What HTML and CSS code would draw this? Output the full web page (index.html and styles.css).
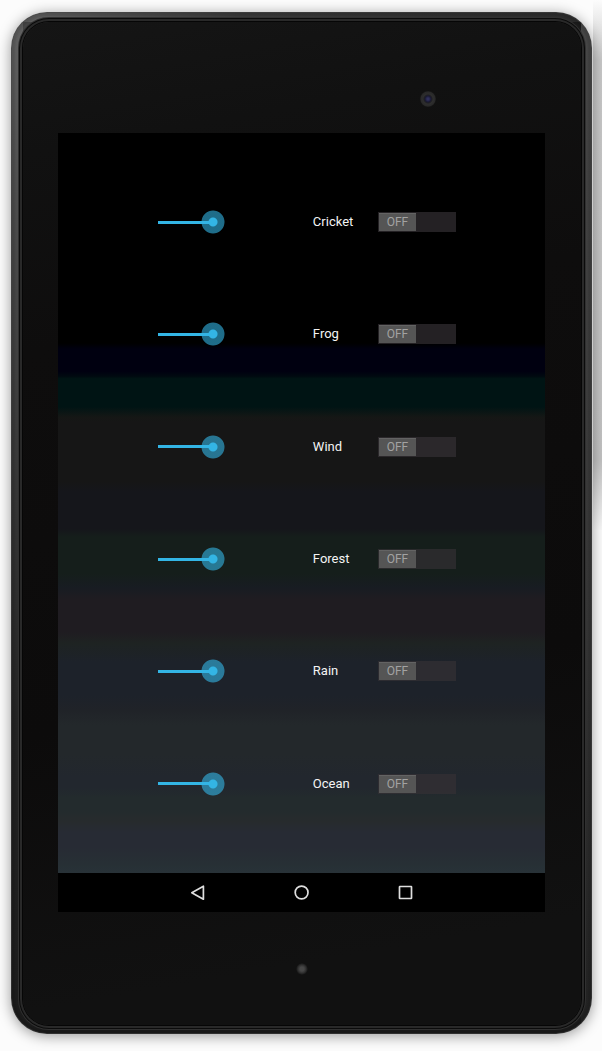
FILE: index.html
```html
<!DOCTYPE html>
<html lang="en">
<head>
<meta charset="utf-8">
<meta name="viewport" content="width=device-width, initial-scale=1">
<title>Nature sounds</title>
<link rel="stylesheet" href="styles.css">
</head>
<body>
<div class="device">
  <div class="face">
    <div class="top-bezel"><span class="camera"></span></div>
    <div class="screen">
      <main class="sounds">
        <div class="sound">
          <input class="volume" type="range" value="100" aria-label="Cricket volume">
          <label class="name" for="cricket">Cricket</label>
          <button class="switch" id="cricket" type="button" role="switch" aria-checked="false"><span class="knob">OFF</span></button>
        </div>
        <div class="sound">
          <input class="volume" type="range" value="100" aria-label="Frog volume">
          <label class="name" for="frog">Frog</label>
          <button class="switch" id="frog" type="button" role="switch" aria-checked="false"><span class="knob">OFF</span></button>
        </div>
        <div class="sound">
          <input class="volume" type="range" value="100" aria-label="Wind volume">
          <label class="name" for="wind">Wind</label>
          <button class="switch" id="wind" type="button" role="switch" aria-checked="false"><span class="knob">OFF</span></button>
        </div>
        <div class="sound">
          <input class="volume" type="range" value="100" aria-label="Forest volume">
          <label class="name" for="forest">Forest</label>
          <button class="switch" id="forest" type="button" role="switch" aria-checked="false"><span class="knob">OFF</span></button>
        </div>
        <div class="sound">
          <input class="volume" type="range" value="100" aria-label="Rain volume">
          <label class="name" for="rain">Rain</label>
          <button class="switch" id="rain" type="button" role="switch" aria-checked="false"><span class="knob">OFF</span></button>
        </div>
        <div class="sound">
          <input class="volume" type="range" value="100" aria-label="Ocean volume">
          <label class="name" for="ocean">Ocean</label>
          <button class="switch" id="ocean" type="button" role="switch" aria-checked="false"><span class="knob">OFF</span></button>
        </div>
      </main>
      <nav class="navbar">
        <button class="nav-button" type="button" aria-label="Back"><svg width="16" height="16" viewBox="0 0 16 16"><path d="M13.4 1.2v13L1.8 7.7z"/></svg></button>
        <button class="nav-button" type="button" aria-label="Home"><svg width="16" height="16" viewBox="0 0 16 16"><circle cx="7.6" cy="7.5" r="6.4"/></svg></button>
        <button class="nav-button" type="button" aria-label="Recent apps"><svg width="16" height="16" viewBox="0 0 16 16"><rect x="1.5" y="1.5" width="12" height="12" rx=".4"/></svg></button>
      </nav>
    </div>
    <div class="bottom-bezel"><span class="led"></span></div>
  </div>
</div>
</body>
</html>
```
FILE: styles.css
```css
* { box-sizing: border-box; }

body {
  margin: 0;
  min-height: 100vh;
  padding: 12px 10px 17px 11px;
  display: flex;
  background:
    linear-gradient(#fcfcfc, #c8c8c8 60px, #c2c2c2 460px, #fafafa 530px) right top / 9px 530px no-repeat,
    #fcfcfc;
  font-family: Roboto, "Liberation Sans", sans-serif;
}

.device {
  flex: 1;
  display: flex;
  padding: 10px 11px 9px 12px;
  border-radius: 36px;
  background:
    linear-gradient(#626262, #4c4c4c 20%, #242424 70%, #1c1c1c) left / 12px 100% no-repeat,
    linear-gradient(#484848, #363636 60%, #222) right / 11px 100% no-repeat,
    linear-gradient(90deg, #626262, #3a3a3a 40%, #2c2c2c) top / 100% 10px no-repeat,
    linear-gradient(135deg, #5a5a5a, #1c1c1c 60px);
  box-shadow: 0 2px 14px rgba(0, 0, 0, .4), inset 0 0 0 1px rgba(70, 70, 70, .5), inset 0 0 2px 4px rgba(0, 0, 0, .12);
}

.face {
  flex: 1;
  display: flex;
  flex-direction: column;
  border-radius: 26px;
  padding: 0 36px 0 35px;
  background: linear-gradient(170deg, #151515, #111 12%, #0e0d0d 30%, #0c0b0b 65%, #111 90%);
  box-shadow: 0 0 0 1px #060606, 0 0 0 3px #292929, 0 0 0 4px #0b0b0b, 0 0 0 5px #303030;
}

.top-bezel {
  height: 111px;
  display: flex;
  align-items: flex-end;
  padding: 0 109px 26px 0;
  justify-content: flex-end;
}

.camera {
  width: 16px;
  height: 16px;
  border-radius: 50%;
  background: radial-gradient(circle, #30305c 0 1px, #191932 3px, #202023 4px, #2e2e2e 5px, #292929 7px, #191919 8px);
}

.screen {
  flex: 1;
  display: flex;
  flex-direction: column;
  background: #000;
}

.sounds {
  flex: 1;
  display: grid;
  grid-template-rows: repeat(6, 1fr);
  padding: 33px 0;
  background: linear-gradient(
    #000 0 28.4%,
    #000010 29.2% 32.2%,
    #000a10 32.9%,
    #001414 33.2% 37%,
    #151715 38.4%,
    #161616 39% 47%,
    #15161b 48.5% 53.5%,
    #151e1b 54.6% 59.5%,
    #181c22 61.5%,
    #1f1c21 63% 67.4%,
    #1e2322 69%,
    #1d222a 71.5% 76%,
    #202328 78%,
    #23282b 80% 84%,
    #22272e 87% 88.5%,
    #232b2d 89.8% 91.5%,
    #272b2d 93%,
    #272b34 94.5% 96.5%,
    #273035 99%,
    #283238);
}

.sound {
  display: grid;
  grid-template-columns: 155fr 65fr 78px;
  align-items: center;
  margin: 0 18.3% 0 20.5%;
}

.volume {
  appearance: none;
  width: 67px;
  height: 24px;
  margin: 0;
  background: linear-gradient(#33b5e5, #33b5e5) left center / 55px 3px no-repeat;
}

.volume::-webkit-slider-thumb {
  appearance: none;
  width: 24px;
  height: 24px;
  border-radius: 50%;
  background: radial-gradient(circle, #33b5e5 0 4px, rgba(51, 181, 229, .6) 5px 11px, transparent 12px);
}

.name {
  color: #f4f4f4;
  font-size: 13px;
  line-height: 16px;
}

.switch {
  height: 20px;
  padding: 1px;
  border: 0;
  background: rgba(53, 49, 53, .68);
  font: 12px/18px Roboto, "Liberation Sans", sans-serif;
}

.knob {
  display: block;
  width: 37px;
  color: #a2a2a2;
  background: #555;
  box-shadow: inset 0 1px #636363;
  text-align: center;
}

.navbar {
  height: 39px;
  display: flex;
  justify-content: center;
  gap: 88px;
}

.nav-button {
  width: 16px;
  padding: 0;
  border: 0;
  background: none;
  display: flex;
  align-items: center;
}

.nav-button svg {
  fill: none;
  stroke: #dedede;
  stroke-width: 1.7;
  stroke-linejoin: round;
}

.bottom-bezel {
  height: 113px;
  display: flex;
  align-items: center;
  justify-content: center;
}

.led {
  width: 12px;
  height: 12px;
  border-radius: 50%;
  background: radial-gradient(circle, #474747 0 2px, #303030 4px, transparent 6px);
}
```
